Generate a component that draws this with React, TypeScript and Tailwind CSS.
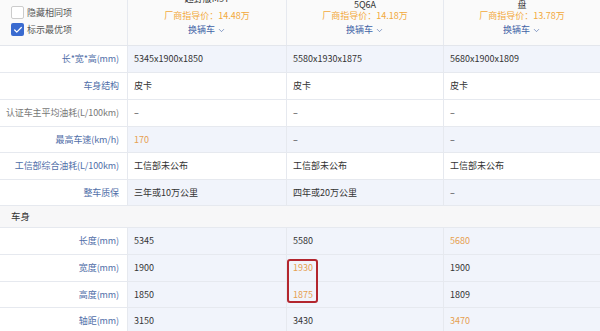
import { ChevronDown, Check } from "lucide-react";

const font = { fontFamily: '"Noto Sans CJK SC", "Noto Sans", sans-serif' };

type Row = {
  label: string;
  values: string[];
  best?: number[];
  tint?: boolean;
  gray?: boolean;
  h: string;
};

const topRows: Row[] = [
  { label: "长*宽*高(mm)", values: ["5345x1900x1850", "5580x1930x1875", "5680x1900x1809"], tint: true, h: "h-[27px]" },
  { label: "车身结构", values: ["皮卡", "皮卡", "皮卡"], h: "h-[27px]" },
  { label: "认证车主平均油耗(L/100km)", values: ["–", "–", "–"], gray: true, h: "h-[27px]" },
  { label: "最高车速(km/h)", values: ["170", "–", "–"], best: [0], tint: true, h: "h-[26px]" },
  { label: "工信部综合油耗(L/100km)", values: ["工信部未公布", "工信部未公布", "工信部未公布"], h: "h-[27px]" },
  { label: "整车质保", values: ["三年或10万公里", "四年或20万公里", "–"], tint: true, h: "h-[26px]" },
];

const bodyRows: Row[] = [
  { label: "长度(mm)", values: ["5345", "5580", "5680"], best: [2], tint: true, h: "h-[27px]" },
  { label: "宽度(mm)", values: ["1900", "1930", "1900"], best: [1], tint: true, h: "h-[27px]" },
  { label: "高度(mm)", values: ["1850", "1875", "1809"], best: [1], tint: true, h: "h-[26px]" },
  { label: "轴距(mm)", values: ["3150", "3430", "3470"], best: [2], tint: true, h: "h-[27px]" },
];

const widths = ["w-[159px]", "w-[157px]", "w-[156px]"];

const TableRow = ({ row }: { row: Row }) => (
  <div className={`flex ${row.h} border-b border-[#e6e9ef] text-[9px] whitespace-nowrap`}>
    <div
      className={`w-[128px] shrink-0 flex items-center justify-end pr-[8px] border-r border-[#e6e9ef] bg-white tracking-[-0.1px] ${
        row.gray ? "text-[#777]" : "text-[#4f6ea8]"
      }`}
    >
      {row.label}
    </div>
    {row.values.map((v, i) => (
      <div
        key={i}
        className={`${widths[i]} shrink-0 flex items-center pl-[6px] ${i < 2 ? "border-r border-[#e6e9ef]" : ""} ${
          row.tint ? "bg-[#f1f4fb]" : "bg-white"
        } ${row.best?.includes(i) ? "text-[#e6a04f]" : "text-[#333]"}`}
      >
        {v}
      </div>
    ))}
  </div>
);

const CarHead = ({ name, price, w, shift }: { name: string; price: string; w: string; shift: string }) => (
  <div className={`${w} shrink-0 flex flex-col items-center border-r border-[#e6e9ef] last:border-r-0 whitespace-nowrap`}>
    <div className={`${shift} text-[9px] leading-[10px] text-[#333]`}>{name}</div>
    <div className="text-[9px] leading-[11px] text-[#f2a93b]">厂商指导价：{price}</div>
    <div className="mt-[4px] flex items-center gap-[2px] text-[9px] leading-[10px] text-[#3f63a6]">
      换辆车
      <ChevronDown size={9} strokeWidth={1.6} />
    </div>
  </div>
);

export default function App() {
  return (
    <div className="w-[600px] h-[331px] overflow-hidden bg-white relative" style={font}>
      {/* header */}
      <div className="flex h-[46px] bg-[#fafafa] border-b border-[#e3e6ec]">
        <div className="w-[128px] shrink-0 border-r border-[#e6e9ef] flex flex-col gap-[4px] pl-[11px] pt-[6px] text-[9px] text-[#555]">
          <label className="flex items-center gap-[3px] h-[13px]">
            <span className="w-[13px] h-[13px] border border-[#ccc] bg-white rounded-[2px]" />
            隐藏相同项
          </label>
          <label className="flex items-center gap-[3px] h-[13px]">
            <span className="w-[13px] h-[13px] bg-[#3a6bd0] rounded-[2px] flex items-center justify-center">
              <Check size={10} strokeWidth={3} className="text-white" />
            </span>
            标示最优项
          </label>
        </div>
        <CarHead name="越野版M5T" price="14.48万" w="w-[159px]" shift="-translate-y-[6px]" />
        <CarHead name="5Q6A" price="14.18万" w="w-[157px]" shift="" />
        <CarHead name="盘" price="13.78万" w="w-[156px]" shift="" />
      </div>

      {topRows.map((r) => (
        <TableRow key={r.label} row={r} />
      ))}

      {/* section */}
      <div className="h-[22px] flex items-center pl-[11px] bg-[#f7f7f8] border-b border-[#e6e9ef] text-[9.5px] text-[#333]">
        车身
      </div>

      {bodyRows.map((r) => (
        <TableRow key={r.label} row={r} />
      ))}

      {/* highlight box */}
      <div className="absolute left-[287px] top-[259px] w-[31px] h-[44px] border-2 border-[#b3262e] rounded-[3px]" />
    </div>
  );
}
